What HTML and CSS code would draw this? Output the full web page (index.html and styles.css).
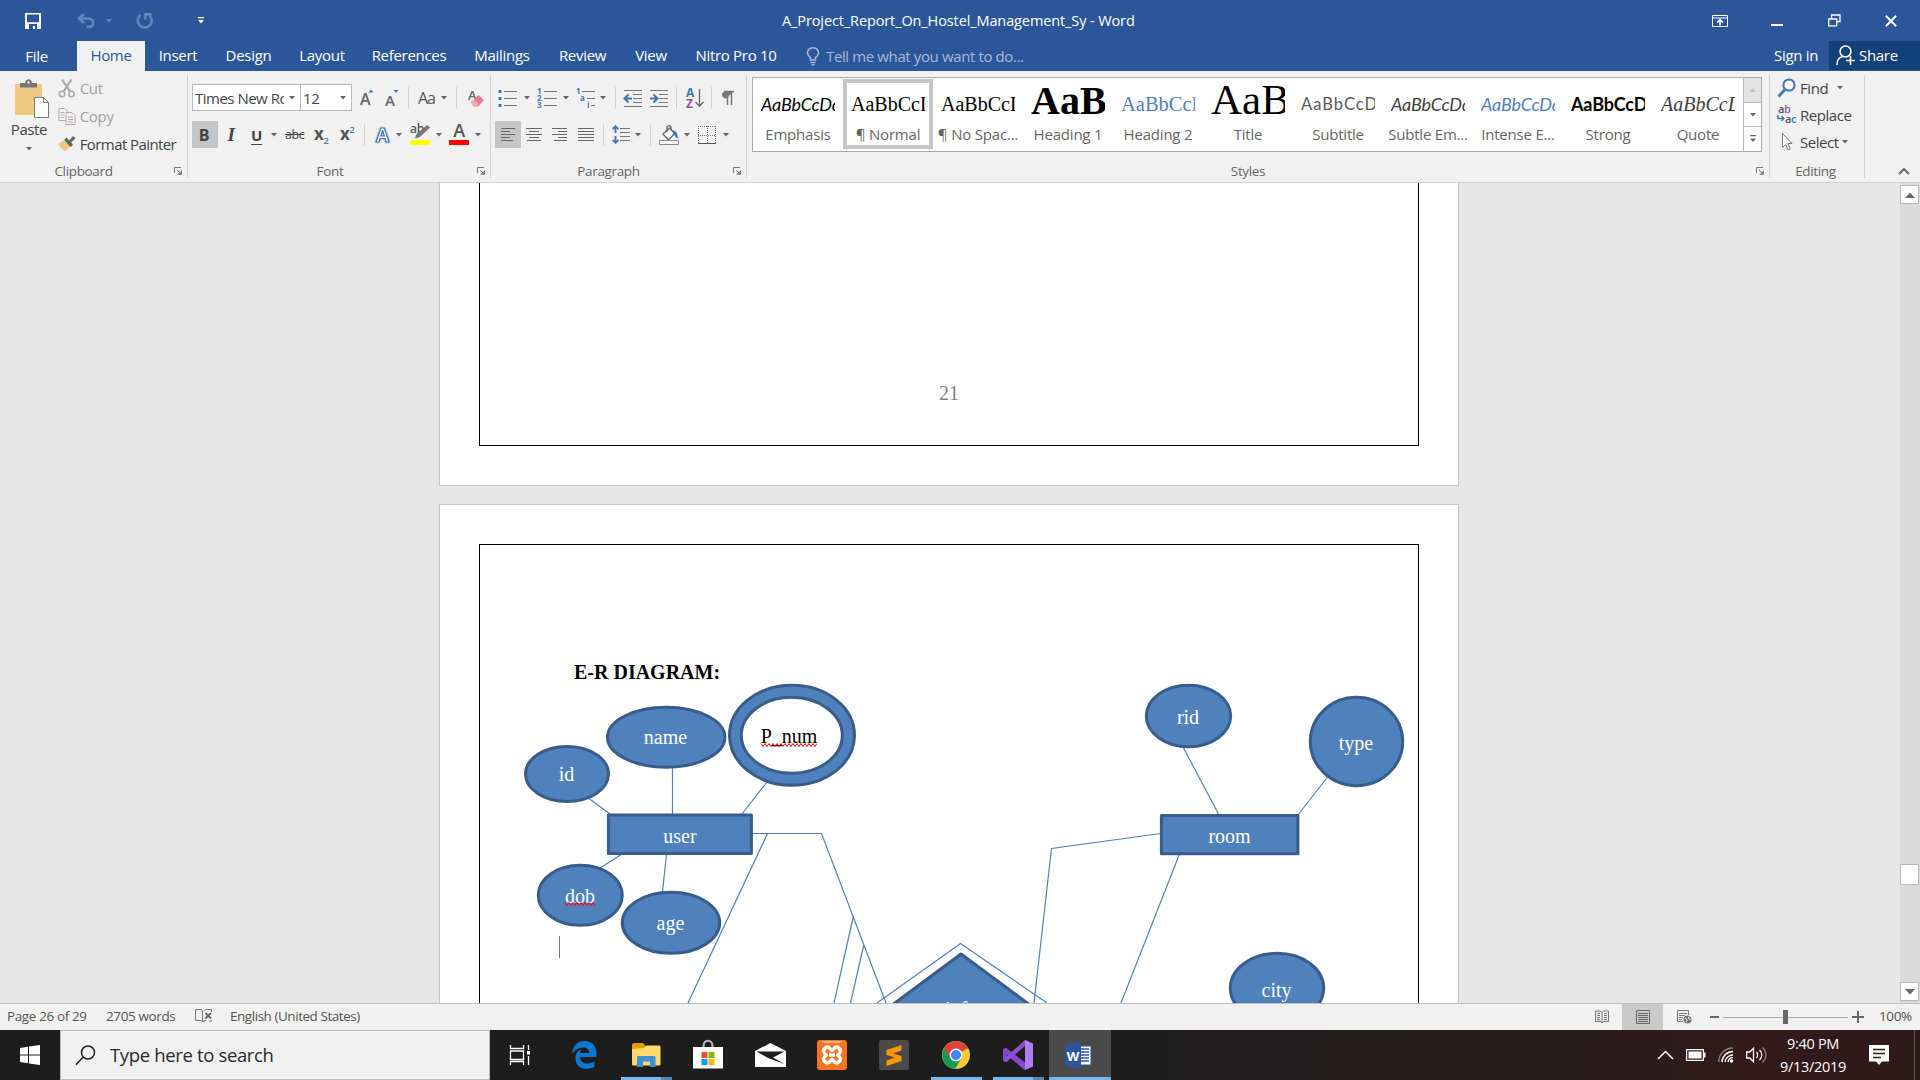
FILE: index.html
```html
<!DOCTYPE html>
<html lang="en">
<head>
<meta charset="utf-8">
<title>A_Project_Report_On_Hostel_Management_Sy - Word</title>
<link rel="stylesheet" href="styles.css">
</head>
<body>
<svg class="defs" width="0" height="0">
  <symbol id="arrow" viewBox="0 0 6 4"><path d="M0 0h6L3 3.6z" fill="#666"/></symbol>
  <symbol id="launcher" viewBox="0 0 8 8"><path d="M.5 6V.5H7M3 3l4 4M7.2 3.5v3.7H3.5" fill="none" stroke="#777"/><path d="M7.7 4v3.7H4z" fill="#777"/></symbol>
</svg>

<header class="titlebar">
  <div class="quick">
    <svg class="save" width="16" height="16" viewBox="0 0 16 16"><path d="M0 0h16v16H0z" fill="#fff"/><path d="M2 1.400h12v7.800H2zM4 11h8v5h-2v-3H8v3H4z" fill="#2b579a"/></svg>
    <svg class="undo" width="18" height="16" viewBox="0 0 18 16"><path d="M7 1L2 5.500l5 4.500M2 5.500h9c7 0 7 8.500 0 8.500H9.500" fill="none" stroke="#6487bb" stroke-width="2.600"/></svg>
    <svg class="undo-more" width="6" height="4"><path d="M0 0h6L3 3.600z" fill="#6487bb"/></svg>
    <svg class="redo" width="18" height="17" viewBox="0 0 18 17"><path d="M4.500 3A7 7 0 1 0 13.500 3.500M9.500 7.500V2.200h6" fill="none" stroke="#6487bb" stroke-width="2.500"/></svg>
    <svg class="qmore" width="6" height="7"><path d="M0 0h6v1.300H0zM0 3h6L3 6.400z" fill="#fff"/></svg>
  </div>
  <div class="doc-title">A_Project_Report_On_Hostel_Management_Sy - Word</div>
  <div class="winbtns">
    <svg width="16" height="12"><path d="M.5.500h15v11H.5zM0 3h16" fill="none" stroke="#fff"/><path d="M8 4.500v6M5 7.500l3-2.800 3 2.800" fill="none" stroke="#fff" stroke-width="1.700"/></svg>
    <svg width="12" height="12"><path d="M0 9h12v2H0z" fill="#fff"/></svg>
    <svg width="13" height="13"><path d="M.7 5h8v6.800h-8zM3.500 4.500V1h8.500v6.500H9" fill="none" stroke="#fff" stroke-width="1.300"/></svg>
    <svg width="12" height="12"><path d="M.8.800l10.400 10.400M11.200.800L.8 11.200" stroke="#fff" stroke-width="2"/></svg>
  </div>
</header>

<nav class="tabs">
  <a class="file">File</a><a class="active">Home</a><a>Insert</a><a>Design</a><a>Layout</a><a>References</a><a>Mailings</a><a>Review</a><a>View</a><a>Nitro Pro 10</a>
  <div class="tell">
    <svg width="12" height="19" viewBox="0 0 12 19"><path d="M3.500 13v-2.500C-3 5 2.500.700 6 .700s9 4.300 2.500 9.800V13zM3.500 15.500h5M4.500 17.800h3" fill="none" stroke="#a5b9d8" stroke-width="1.500"/></svg>
    <span>Tell me what you want to do...</span>
  </div>
  <span class="signin">Sign in</span>
  <div class="share"><svg width="20" height="21" viewBox="0 0 20 21"><circle cx="9.500" cy="6.500" r="5.500" fill="none" stroke="#fff" stroke-width="1.500"/><path d="M1 20c0-5 2.500-8 6-8.500M10 15.500h9M14.500 11v9" fill="none" stroke="#fff" stroke-width="1.500"/></svg><span>Share</span></div>
</nav>

<section class="ribbon">
  <div class="group clipboard">
    <div class="body">
      <div class="paste">
        <svg width="36" height="40" viewBox="0 0 36 40"><path d="M1 5h27v31H1z" fill="#edc87e"/><path d="M6 8.500V4h5c0-5 7-5 7 0h5v4.500z" fill="#757575"/><circle cx="14.500" cy="3.500" r="1.300" fill="#f1f1f1"/><path d="M20.500 18.500h9l5 5v15h-14z" fill="#fff" stroke="#777"/><path d="M29.500 18.500v5h5" fill="none" stroke="#777"/></svg>
        <span>Paste</span>
        <svg width="6" height="4"><use href="#arrow"/></svg>
      </div>
      <div class="clip-list">
        <div class="off"><svg width="17" height="19" viewBox="0 0 17 19"><g fill="none" stroke="#a9a9a9" stroke-width="1.600"><path d="M3.500.500l8 12M13 .500l-8 12" stroke-width="2.200"/><circle cx="3.500" cy="15" r="2.700"/><circle cx="13" cy="15" r="2.700"/></g></svg><span>Cut</span></div>
        <div class="off"><svg width="17" height="19" viewBox="0 0 17 19"><g fill="#f4f2f4" stroke="#b0aab0"><path d="M.5 1.500h6l3 3v9h-9z"/><path d="M7.500 5.500h6l3 3v9h-9z"/><path d="M2 5.500h4M2 8h4M2 10.500h4M9.500 10h5M9.500 12.500h5M9.500 15h5"/></g></svg><span>Copy</span></div>
        <div><svg width="18" height="16" viewBox="0 0 18 16"><path d="M0 8l6-3.500 6 6L7.500 15C4 14 2 11 0 8z" fill="#edc87e"/><path d="M6 4l2.500-2.500 2.700 3L15 0l2.500 2.500-4.300 4L15 9l-2.500 2z" fill="#666"/></svg><span class="fp">Format Painter</span></div>
      </div>
    </div>
    <footer><span>Clipboard</span><svg width="8" height="8"><use href="#launcher"/></svg></footer>
  </div>

  <div class="group font">
    <div class="row one">
      <div class="combo face"><span>Times New Roman</span><svg width="6" height="4"><use href="#arrow"/></svg></div>
      <div class="combo size"><span>12</span><svg width="6" height="4"><use href="#arrow"/></svg></div>
      <svg class="m8" width="16" height="18"><text x="0" y="16" class="g17">A</text><path d="M8.500 3.500h5L11 .500z" fill="#3f76b5"/></svg>
      <svg class="m9" width="16" height="18"><text x="0" y="17" class="g16">A</text><path d="M8.500 1h5L11 4z" fill="#3f76b5"/></svg>
      <i class="sep m7"></i>
      <span class="aa">Aa</span>
      <svg class="m6" width="6" height="4"><use href="#arrow"/></svg>
      <i class="sep m9"></i>
      <svg class="m11" width="17" height="20" viewBox="0 0 17 20"><text x="0" y="12" class="g15">A</text><path d="M3 14.500L10.500 7l5.500 5-6 6.500H6z" fill="#e8798f"/><path d="M3 14.500l3.300-3 4.500 4.500-2.300 2.500H6z" fill="#f2a7b5"/></svg>
    </div>
    <div class="row two">
      <b class="hl">B</b>
      <i class="it">I</i>
      <b class="un">U</b>
      <svg class="m9" width="6" height="4"><use href="#arrow"/></svg>
      <s class="st">abc</s>
      <svg class="m8" width="16" height="20"><text x="0" y="15" class="xb">x</text><text x="9.500" y="19" class="idx">2</text></svg>
      <svg class="m10" width="16" height="20"><text x="0" y="15" class="xb">x</text><text x="9.500" y="8" class="idx">2</text></svg>
      <i class="sep m8"></i>
      <svg class="m9" width="18" height="20"><text x="2" y="17" class="glow">A</text></svg>
      <svg class="m4" width="6" height="4"><use href="#arrow"/></svg>
      <svg class="m8" width="20" height="21"><text x="0" y="9" class="hlt">ab</text><path d="M5 14.500l1.500-4.500L17 1l3 2.500-10 9.500z" fill="#777"/><path d="M0 16h20v5H0z" fill="#ff0"/></svg>
      <svg class="m6" width="6" height="4"><use href="#arrow"/></svg>
      <svg class="m7" width="20" height="21"><text x="10" y="13" text-anchor="middle" class="g18">A</text><path d="M0 16h20v5H0z" fill="red"/></svg>
      <svg class="m6" width="6" height="4"><use href="#arrow"/></svg>
    </div>
    <footer><span>Font</span><svg width="8" height="8"><use href="#launcher"/></svg></footer>
  </div>

  <div class="group para">
    <div class="row one">
      <svg class="m7" width="20" height="18"><path d="M6 2.500h13M6 9.500h13M6 16.500h13" stroke="#777"/><path d="M.5 1h3v3h-3zM.5 8h3v3h-3zM.5 15h3v3h-3z" fill="#3f76b5"/></svg>
      <svg class="m6" width="6" height="4"><use href="#arrow"/></svg>
      <svg class="m7" width="20" height="20"><path d="M7 3.500h13M7 10.500h13M7 17.500h13" stroke="#777"/><g class="dg"><text x="0" y="6">1</text><text x="0" y="13">2</text><text x="0" y="20">3</text></g></svg>
      <svg class="m6" width="6" height="4"><use href="#arrow"/></svg>
      <svg class="m7" width="20" height="20"><path d="M6 3.500h13M11 10.500h8M15 17.500h4" stroke="#777"/><g class="dg"><text x="0" y="6">1</text><text x="4" y="13">a</text><text x="11" y="20">i</text></g></svg>
      <svg class="m4" width="6" height="4"><use href="#arrow"/></svg>
      <i class="sep m9"></i>
      <svg class="m7" width="20" height="18"><path d="M1 1.500h18M10 5.500h9M10 9.500h9M10 13.500h9M1 17.500h18" stroke="#777"/><path d="M9 9.500H2M5.500 5.500l-4 4 4 4" fill="none" stroke="#3f76b5" stroke-width="2"/></svg>
      <svg class="m6" width="20" height="18"><path d="M1 1.500h18M10 5.500h9M10 9.500h9M10 13.500h9M1 17.500h18" stroke="#777"/><path d="M1 9.500h7M4.500 5.500l4 4-4 4" fill="none" stroke="#3f76b5" stroke-width="2"/></svg>
      <i class="sep m7"></i>
      <svg class="m9" width="18" height="20"><text x="0" y="9" class="az a">A</text><text x="0" y="19.500" class="az z">Z</text><path d="M13.500 1v17M9.500 14l4 4 4-4" fill="none" stroke="#666" stroke-width="1.300"/></svg>
      <i class="sep m7"></i>
      <svg class="m9" width="14" height="16"><path d="M5.500 8.500C-.5 8.500-.5 1 5.500 1H13" fill="#777"/><path d="M3 1.500h10M6.500 1v14M10.500 1v14" stroke="#777" stroke-width="1.500"/></svg>
    </div>
    <div class="row two">
      <div class="hl"><svg width="14" height="13"><path d="M0 .500h14M0 3.500h9M0 6.500h14M0 9.500h9M0 12.500h12" stroke="#666"/></svg></div>
      <svg class="m5" width="16" height="13"><path d="M0 .500h16M3 3.500h10M0 6.500h16M3 9.500h10M1 12.500h14" stroke="#666"/></svg>
      <svg class="m10" width="15" height="13"><path d="M0 .500h15M6 3.500h9M0 6.500h15M6 9.500h9M2 12.500h13" stroke="#666"/></svg>
      <svg class="m11" width="16" height="13"><path d="M0 .500h16M0 3.500h16M0 6.500h16M0 9.500h16M0 12.500h16" stroke="#666"/></svg>
      <i class="sep m9"></i>
      <svg class="m8" width="18" height="19"><path d="M3.500 1v7M.7 4L3.500 1.200 6.300 4M3.500 11v7M.7 15l2.800 2.800L6.300 15" fill="none" stroke="#3f76b5" stroke-width="1.800"/><path d="M8 3.500h10M8 7.500h10M8 11.500h10M8 15.500h10" stroke="#777"/></svg>
      <svg class="m5" width="6" height="4"><use href="#arrow"/></svg>
      <i class="sep m9"></i>
      <svg class="m8" width="20" height="20"><path d="M4 9l6.500-6 5 5.500-6 6.500z" fill="#fff" stroke="#666" stroke-width="1.300"/><path d="M8 7V2.500c0-2.500 4-2.500 4 0V5" fill="none" stroke="#666" stroke-width="1.300"/><path d="M13 5c5 1 6 4 5.500 9L15 10z" fill="#3f76b5"/><path d="M.5 15.500h19v4H.5z" fill="#fff" stroke="#888"/></svg>
      <svg class="m5" width="6" height="4"><use href="#arrow"/></svg>
      <svg class="m8" width="18" height="18"><path d="M.5 0v17M9.500 0v17M17.500 0v17M0 .500h18M0 9.500h18" stroke="#777" stroke-dasharray="1 1"/><path d="M0 17.500h18" stroke="#555"/></svg>
      <svg class="m7" width="6" height="4"><use href="#arrow"/></svg>
    </div>
    <footer><span>Paragraph</span><svg width="8" height="8"><use href="#launcher"/></svg></footer>
  </div>

  <div class="group styles">
    <div class="gallery">
      <div class="style"><p class="em">AaBbCcDd</p><span>Emphasis</span></div>
      <div class="style on"><p>AaBbCcDd</p><span>¶ Normal</span></div>
      <div class="style"><p>AaBbCcDd</p><span>¶ No Spac...</span></div>
      <div class="style"><p class="h1">AaB</p><span>Heading 1</span></div>
      <div class="style"><p class="h2">AaBbCcDd</p><span>Heading 2</span></div>
      <div class="style"><p class="ti">AaB</p><span>Title</span></div>
      <div class="style"><p class="su">AaBbCcDd</p><span>Subtitle</span></div>
      <div class="style"><p class="em se">AaBbCcDd</p><span>Subtle Em...</span></div>
      <div class="style"><p class="em ie">AaBbCcDd</p><span>Intense E...</span></div>
      <div class="style"><p class="sg">AaBbCcDd</p><span>Strong</span></div>
      <div class="style"><p class="qu">AaBbCcDd</p><span>Quote</span></div>
      <div class="gscroll">
        <div class="dim"><svg width="6" height="4"><path d="M0 4h6L3 .500z" fill="#bbb"/></svg></div>
        <div><svg width="6" height="4"><use href="#arrow"/></svg></div>
        <div><svg width="6" height="8"><path d="M0 0h6v1.200H0zM0 3.500h6L3 7z" fill="#666"/></svg></div>
      </div>
    </div>
    <footer><span>Styles</span><svg width="8" height="8"><use href="#launcher"/></svg></footer>
  </div>

  <div class="group editing">
    <div class="edit-list">
      <div><svg width="20" height="20"><circle cx="12" cy="7" r="5.600" fill="#fff" stroke="#3f76b5" stroke-width="2"/><path d="M8 11.500l-6.500 7" stroke="#3f76b5" stroke-width="2.800"/></svg><span>Find</span><svg class="m6" width="6" height="4"><use href="#arrow"/></svg></div>
      <div><svg width="20" height="20"><text x="1" y="8" class="rp">a</text><text x="7" y="8" class="rp v">b</text><text x="8" y="18" class="rp">a</text><text x="14" y="18" class="rp bl">c</text><path d="M1 10v3.500h6M4.500 11l2.500 2.500L4.500 16" fill="none" stroke="#3f76b5" stroke-width="1.300"/></svg><span>Replace</span></div>
      <div><svg width="20" height="20"><path d="M5.500 1.500v14l3.300-3 2.500 5.500 2-1-2.500-5.500h4.200z" fill="#fff" stroke="#777"/></svg><span>Select</span><svg width="6" height="4"><use href="#arrow"/></svg></div>
    </div>
    <footer><span>Editing</span></footer>
  </div>
  <svg class="collapse" width="12" height="8"><path d="M1 7l5-5 5 5" fill="none" stroke="#666" stroke-width="2"/></svg>
</section>

<main class="workspace">
  <div class="pages">
    <section class="page first"><div class="frame"><span>21</span></div></section>
    <section class="page second"><div class="frame"><h1>E-R DIAGRAM:</h1></div></section>
    <svg class="diagram" width="1020" height="820" viewBox="439 183 1020 820">
      <g class="line">
        <path d="M589 798.500L610 814M672.500 768v46M767 782l-25 32M752 833.500h69.500L886 1003M767.500 833.500L688 1003M853.500 915.500L834 1003M864 944l-13.500 59M622 854l-22 14M666.500 854l-4 38M1183 747l35.500 67M1327.500 777L1298 815M1161 833.500L1051.500 848.500 1034 1003M1179.500 854L1121 1003"/>
        <path d="M877 1003l83.500-59.500L1047 1003"/>
      </g>
      <g class="shape">
        <ellipse cx="567" cy="774" rx="41.500" ry="27.500"/>
        <ellipse cx="666.200" cy="737.200" rx="58.700" ry="30"/>
        <ellipse cx="792" cy="735.300" rx="62.500" ry="50"/>
        <ellipse cx="791.800" cy="735.300" rx="50.500" ry="38" class="hole"/>
        <rect x="608.400" y="815" width="143" height="38.500"/>
        <ellipse cx="580.300" cy="895.300" rx="42" ry="30"/>
        <ellipse cx="671" cy="922.800" rx="48.700" ry="30.500"/>
        <ellipse cx="1188.500" cy="716" rx="42.200" ry="30.700"/>
        <ellipse cx="1356.500" cy="741.500" rx="46.200" ry="44.200"/>
        <rect x="1161.400" y="815.400" width="136.500" height="38.400"/>
        <ellipse cx="1277" cy="988" rx="46.700" ry="34.700"/>
        <path d="M961 954L880 1014l81 60 81-60z"/>
      </g>
      <g class="label">
        <text x="566.500" y="781">id</text><text x="665.500" y="744">name</text><text x="789" y="742.500" class="dark">P_num</text><text x="680" y="842.500">user</text>
        <text x="580" y="902.500">dob</text><text x="670.500" y="930">age</text><text x="1188" y="723.500">rid</text><text x="1356" y="749.500">type</text><text x="1229.500" y="842.500">room</text><text x="1276.500" y="996.500">city</text><text x="961" y="1016">info</text>
      </g>
      <path class="squiggle" d="M761 743.500l2 3 2-3 2 3 2-3 2 3 2-3 2 3 2-3 2 3 2-3 2 3 2-3 2 3 2-3 2 3 2-3 2 3 2-3 2 3 2-3 2 3 2-3 2 3 2-3 2 3 2-3 2 3 2-3M565 902.500l2 3 2-3 2 3 2-3 2 3 2-3 2 3 2-3 2 3 2-3 2 3 2-3 2 3 2-3 2 3"/>
      <path d="M559.500 936v22" stroke="#777"/>
    </svg>
  </div>
  <div class="vscroll">
    <div class="btn"><svg width="10" height="6"><path d="M0 6h10L5 .500z" fill="#666"/></svg></div>
    <div class="thumb"></div>
    <div class="btn"><svg width="10" height="6"><path d="M0 0h10L5 5.500z" fill="#666"/></svg></div>
  </div>
</main>

<div class="status">
  <span class="s1">Page 26 of 29</span><span class="s2">2705 words</span>
  <svg class="proof" width="18" height="16"><path d="M7.500 14V2.500L6 1.500H.5v11H6l2 1.500 2-1.500h1M9.500 2.500l1.500-1h5.500V4M16.500 12v1H14" fill="none" stroke="#777"/><path d="M10.500 5l5.500 5.500M16 5l-5.500 5.500" stroke="#666" stroke-width="1.800"/></svg>
  <span class="s3">English (United States)</span>
  <div class="views">
    <svg width="14" height="14"><path d="M7 2.500L5.500 1H.5v10.500h5L7 13l1.500-1.500h5V1h-5zV13M2 3.500h3M2 5.500h3M2 7.500h3M2 9.500h3M9 3.500h3M9 5.500h3M9 7.500h3M9 9.500h3" fill="none" stroke="#777"/></svg>
    <div class="cur"><svg width="14" height="14"><path d="M.5.500h13v13H.5zM2 3.500h10M2 5.500h10M2 7.500h10M2 9.500h10M2 11.500h10" fill="none" stroke="#666"/></svg></div>
    <svg width="15" height="14"><path d="M11.500 5V.500H.5v11H6M2 3.500h8M2 5.500h6M2 7.500h4M2 9.500h3" fill="none" stroke="#777"/><circle cx="10.500" cy="9.500" r="4" fill="#777"/><path d="M8 8l2 1.500L9.500 12M12 6.500l-.5 2 2 1" fill="none" stroke="#f1f1f1"/></svg>
  </div>
  <svg class="zoomer" width="155" height="14"><path d="M0 6h9v2H0zM142 6h12v2h-12zM147 1h2v12h-2z" fill="#666"/><path d="M13 7.500h125" stroke="#aaa"/><path d="M73 0h5v14h-5z" fill="#666"/></svg>
  <span class="pct">100%</span>
</div>

<footer class="taskbar">
  <div class="start"><svg width="20" height="20"><path d="M0 3l8-1.200v7.700H0zM9 1.600L20 0v9.500H9zM0 10.500h8v7.700L0 17zM9 10.500h11V20L9 18.400z" fill="#fff"/></svg></div>
  <div class="search"><svg width="21" height="21"><circle cx="13" cy="7.500" r="6.500" fill="none" stroke="#222" stroke-width="1.500"/><path d="M8.300 12L1 19.800" stroke="#222" stroke-width="1.500"/></svg><span>Type here to search</span></div>
  <div class="app view"><svg width="22" height="20"><path d="M1.500 0v3.500h13V0M1.500 20v-3.500h13V20M1.500 6h13v8.500h-13zM19.500 0v5M19.500 11v9" fill="none" stroke="#fff" stroke-width="1.300"/><path d="M18 6h3v3.500h-3z" fill="#fff"/></svg></div>
  <div class="app"><svg width="25" height="28" viewBox="0 0 25 28"><path d="M0 13C1 4 6 0 12.500 0 20 0 24.500 5.500 24.500 12v4H8c.3 7.500 8.500 8 14.500 4.500v5.500C14 30 3.500 27.500 3.500 17.500c0-5 2.500-8 6-9.500-1 1.300-1.500 2.500-1.700 4h9.500c0-7-11-8-17.300 1z" fill="#0a78d7"/></svg></div>
  <div class="app run more"><svg width="29" height="24" viewBox="0 0 29 24"><path d="M0 2c0-1 1-2 2-2h9l2.500 3v4H0z" fill="#dfa000"/><path d="M0 6l12-1 2-2.500h13c1 0 1.500.500 1.500 1.500v17c0 1-.5 1.500-1.500 1.500H1.500C.5 22.500 0 22 0 21z" fill="#ffd96b"/><path d="M5 24v-9.500c0-1 .6-1.500 1.500-1.500h15.500c1 0 1.500.500 1.500 1.500V24H18v-5.500h-7V24z" fill="#3b93d6"/></svg></div>
  <div class="app"><svg width="30" height="30" viewBox="0 0 30 30"><path d="M10.500 8V6c0-7 9-7 9 0v2" fill="none" stroke="#bbb" stroke-width="2.200"/><path d="M0 7h30v21.500H0z" fill="#fff"/><path d="M8.500 12h6v6h-6z" fill="#f25022"/><path d="M15.500 12h6v6h-6z" fill="#7fba00"/><path d="M8.500 19h6v6h-6z" fill="#00a4ef"/><path d="M15.500 19h6v6h-6z" fill="#ffb900"/></svg></div>
  <div class="app"><svg width="31" height="24" viewBox="0 0 31 24"><path d="M0 8L15.500 0 31 8v16H0z" fill="#fff"/><path d="M1.500 8.500h28L18 14.500l11.500 6.500L13 15z" fill="#1e1d1d"/></svg></div>
  <div class="app"><svg width="30" height="30" viewBox="0 0 30 30"><rect width="30" height="30" rx="3" fill="#f37623"/><path d="M5 1h20l-2 2H7z" fill="#fbb78b"/><path d="M9 7.500c4-2 4.500 3 6 3s2-5 6-3c5 3 1 6 0 7.500 1 1.500 5 4.500 0 7.500-4 2-4.500-3-6-3s-2 5-6 3c-5-3-1-6 0-7.500-1-1.500-5-4.500 0-7.500zM12 15h6" fill="none" stroke="#fff" stroke-width="3.400"/></svg></div>
  <div class="app"><svg width="30" height="30" viewBox="0 0 30 30"><rect width="30" height="30" rx="2" fill="#4a4a4a"/><path d="M7.500 10L22.500 5v5.500l-8.500 3 8.500 2.500v5L7.500 26v-5.500l8.500-3-8.500-2.500z" fill="#ff9800"/></svg></div>
  <div class="app run"><svg width="28" height="28" viewBox="0 0 28 28"><circle cx="14" cy="14" r="14" fill="#fcc934"/><path d="M14 14L2 7A14 14 0 0 1 26 7z" fill="#db4437"/><path d="M2 7A14 14 0 0 0 13 28l6.500-11L14 14z" fill="#0f9d58"/><path d="M14 7.500h12.300L26 7A14 14 0 0 0 2 7l6 10z" fill="#db4437"/><circle cx="14" cy="14" r="6.500" fill="#fff"/><circle cx="14" cy="14" r="5" fill="#4285f4"/></svg></div>
  <div class="app run more"><svg width="30" height="30" viewBox="0 0 30 30"><path d="M0 9l3-1.300L24 24l-2.500 6L3.500 14.500V22L0 20.500z" fill="#8547cc"/><path d="M0 20.500L3 22.500 22 6V0L3.500 16.500z" fill="#8b4fd0"/><path d="M22 0l8 3.500v23L22 30z" fill="#b27df0"/></svg></div>
  <div class="app run word"><svg width="27" height="27" viewBox="0 0 27 27"><path d="M14 4h12v19H14z" fill="#fff" stroke="#2b579a"/><path d="M16 7h8M16 10h8M16 13h8M16 16h8M16 19h8" stroke="#2b579a" stroke-width="1.600"/><path d="M0 3l16-3v27L0 24z" fill="#2b579a"/><text x="8" y="18.500" text-anchor="middle" class="wl">W</text></svg></div>
  <div class="tray">
    <svg class="chev" width="17" height="10"><path d="M1 9l7.500-7.500L16 9" fill="none" stroke="#fff" stroke-width="1.500"/></svg>
    <svg class="bat" width="20" height="12"><path d="M.6.600h16.800v10.800H.6z" fill="none" stroke="#fff" stroke-width="1.200"/><path d="M2.500 2.500h13v7h-13zM18 3.500h1.500v5H18z" fill="#fff"/></svg>
    <svg class="wifi" width="17" height="16"><g fill="none" stroke-width="1.400"><path d="M.8 15A14 14 0 0 1 15 1" stroke="#8d7b7c"/><path d="M4 15A11 11 0 0 1 15 4.500M7 15A8 8 0 0 1 15 8" stroke="#fff"/><path d="M10 15a5 5 0 0 1 5-4.500" stroke="#fff"/></g><circle cx="13.500" cy="14" r="1.800" fill="#fff"/></svg>
    <svg class="vol" width="21" height="18"><path d="M.7 6h3L7.500 2.200v13.600L3.700 12h-3zM10.500 6c1.500 2 1.500 4 0 6M13.500 4c3 3 3 7 0 10" fill="none" stroke="#fff" stroke-width="1.300"/><path d="M16.500 1.500c4.500 4.500 4.500 10.500 0 15" fill="none" stroke="#8d7b7c" stroke-width="1.300"/></svg>
    <div class="clock"><span>9:40 PM</span><span>9/13/2019</span></div>
    <svg class="note" width="20" height="21"><path d="M0 0h20v16.500h-7l-3 3.500-3-3.500H0z" fill="#fff"/><path d="M4 4.500h12M4 8.500h12M4 12.500h8" stroke="#2f191b" stroke-width="1.400"/></svg>
  </div>
</footer>
</body>
</html>
```

FILE: styles.css
```css
* { box-sizing: border-box; }
body {
  margin: 0; width: 1920px; height: 1080px; overflow: hidden;
  display: flex; flex-direction: column;
  font: 15px/20px "Open Sans", "Noto Sans", sans-serif;
  letter-spacing: -.3px; color: #444; background: #e6e6e6;
}
svg { display: block; flex: none; overflow: visible; }
.defs { position: absolute; }
span { white-space: nowrap; }

.titlebar { height: 41px; flex: none; background: #2b579a; display: flex; align-items: center; color: #fff; }
.quick { width: 782px; display: flex; align-items: center; }
.quick .save { margin-left: 25px; }
.quick .undo { margin-left: 36px; }
.quick .undo-more { margin-left: 11px; }
.quick .redo { margin-left: 24px; }
.quick .qmore { margin-left: 44px; }
.doc-title { width: 930px; font-size: 14.500px; letter-spacing: -.11px; }
.winbtns { display: flex; align-items: center; }
.winbtns svg:nth-child(2) { margin-left: 43px; }
.winbtns svg:nth-child(3) { margin-left: 45px; }
.winbtns svg:nth-child(4) { margin-left: 44px; }

.tabs { height: 30px; flex: none; background: #2b579a; display: flex; color: #fff; line-height: 29px; }
.tabs a { text-align: center; width: 66px; }
.tabs a.file { width: 77px; padding: 1px 4px 0 0; }
.tabs a.active { width: 68px; background: #f1f1f1; color: #2b579a; }
.tabs a:nth-child(4) { width: 75px; }
.tabs a:nth-child(5) { width: 72px; }
.tabs a:nth-child(6) { width: 102px; }
.tabs a:nth-child(7) { width: 84px; }
.tabs a:nth-child(8) { width: 77px; }
.tabs a:nth-child(9) { width: 60px; }
.tabs a:nth-child(10) { width: 110px; }
.tell { display: flex; align-items: center; gap: 7px; margin-left: 16px; color: #a5b9d8; flex: 1; letter-spacing: -.38px; }
.signin { width: 55px; }
.share { width: 91px; height: 29px; background: #124078; display: flex; align-items: center; gap: 3px; padding-left: 7px; }

.ribbon { height: 112px; flex: none; background: #f1f1f1; border-bottom: 1px solid #d2d2d2; display: flex; padding-top: 4px; }
.group { height: 103px; border-right: 1px solid #d2d2d2; display: flex; flex-direction: column; }
.group footer { height: 14px; margin-top: auto; display: flex; align-items: center; color: #666; font-size: 13.500px; letter-spacing: -.35px; padding: 0 5px 0 0; }
.group footer span { flex: 1; text-align: center; padding-right: 7px; }
.clipboard { width: 188px; }
.clipboard .body { display: flex; }
.paste { width: 58px; display: flex; flex-direction: column; align-items: center; padding-top: 4px; }
.paste svg:first-child { margin-left: 6px; }
.paste span { margin: 0 0 8px; letter-spacing: -.45px; }
.clip-list { width: 130px; margin-top: -1px; }
.clip-list div { height: 28px; display: flex; align-items: center; gap: 4px; }
.clip-list .off { color: #a0a0a0; }
.clip-list svg { width: 18px; }
.clip-list .fp { letter-spacing: -.58px; }
.font { width: 303px; padding-left: 4px; }
.font footer, .para footer { width: 100%; }
.font footer span { padding-right: 9px; }
.para { width: 256px; }
.row { display: flex; align-items: center; flex: none; height: 27px; }
.row.one { margin-top: 9px; }
.row.two { margin-top: 10px; }
.sep { width: 1px; height: 22px; background: #d2d2d2; flex: none; }
.m4 { margin-left: 4px; } .m5 { margin-left: 5px; } .m6 { margin-left: 6px; }
.m7 { margin-left: 7px; } .m8 { margin-left: 8px; } .m9 { margin-left: 9px; } .m10 { margin-left: 10px; }
.m11 { margin-left: 11px; }
.combo { height: 27px; border: 1px solid #bababa; background: #fff; display: flex; align-items: center; padding-left: 2px; }
.combo.face { width: 109px; }
.combo.face span { width: 89px; overflow: hidden; margin-right: 5px; letter-spacing: -.5px; }
.combo.size { width: 52px; margin-left: -1px; }
.combo.size span { width: 37px; }
.aa { font-size: 16px; margin-left: 9px; width: 17px; letter-spacing: -1.200px; color: #555; }
.g17, .g16, .g15, .g18 { font: 600 16px "Open Sans"; fill: #666; }
.g16 { font-size: 15px; } .g15 { font-size: 13px; } .g18 { font-size: 18px; fill: #555; }
.hl { width: 26px; height: 27px; background: #c5c5c5; display: flex; align-items: center; justify-content: center; }
.font .hl { font-size: 16px; padding-right: 2px; }
.para .hl { margin-left: 4px; }
.it { width: 26px; text-align: center; font: italic bold 19px "Liberation Serif", serif; }
.un { width: 11px; margin-left: 7px; font-size: 15px; text-decoration: underline; text-underline-offset: 3px; }
.st { font-size: 12.500px; margin-left: 8px; width: 21px; letter-spacing: -.4px; }
.xb { font: bold 17px "Open Sans"; fill: #555; }
.idx { font: 600 9px "Open Sans"; fill: #3f76b5; }
.glow { font: bold 19px "Open Sans"; fill: #fff; stroke: #3f76b5; stroke-width: 1.200px; filter: drop-shadow(0 0 1px #7fb0e6); }
.hlt { font: 600 12px "Open Sans"; fill: #555; }
.dg { font: bold 8px "Open Sans"; fill: #3f76b5; }
.az { font: bold 12px "Open Sans"; } .az.a { fill: #3f76b5; } .az.z { fill: #8a5bb0; }

.styles { width: 1023px; padding-left: 5px; }
.styles footer span { padding-right: 12px; }
.gallery { height: 75px; width: 1010px; margin-top: 2px; border: 1px solid #ababab; background: #fff; display: flex; }
.style { width: 90px; flex: none; height: 73px; display: flex; flex-direction: column; align-items: center; color: #666; letter-spacing: -.2px; }
.style.on { box-shadow: inset 0 0 0 4px #c5c5c5; height: 70px; margin-top: 1px; }
.style p { margin: 8px 0 6px; width: 74px; height: 32px; line-height: 36px; overflow: hidden; white-space: nowrap; font-family: "Liberation Serif", serif; font-size: 20px; color: #000; letter-spacing: 0; }
.style.on p { margin-top: 7px; }
.style .em { font: italic 18px/37px Lato, sans-serif; letter-spacing: -.15px; }
.style .se { color: #404040; } .style .ie { color: #4f81bd; }
.style .h1 { font-size: 40px; line-height: 29px; font-weight: bold; }
.style .h2 { font-size: 20.500px; color: #4f81bd; }
.style .ti { font-size: 43px; line-height: 28px; }
.style .su { font: 16.500px/37px Lato, sans-serif; color: #5a5a5a; letter-spacing: 1px; }
.style .sg { font: bold 18px/37px Lato, sans-serif; letter-spacing: -.15px; }
.style .qu { font-style: italic; color: #404040; }
.gscroll { flex: 1; border-left: 1px solid #bababa; display: flex; flex-direction: column; }
.gscroll div { flex: 1; display: flex; align-items: center; justify-content: center; }
.gscroll div + div { border-top: 1px solid #bababa; }
.gscroll .dim { background: #e3e3e3; }
.editing { width: 95px; }
.editing footer span { padding: 0 0 0 2px; }
.edit-list { padding-left: 7px; margin-top: -1px; }
.edit-list div { height: 27px; display: flex; align-items: center; gap: 3px; letter-spacing: -.45px; }
.rp { font: 600 11px "Open Sans"; fill: #555; } .rp.v { fill: #8a5bb0; } .rp.bl { fill: #3f76b5; }
.collapse { margin: 92px 0 0 33px; }

.workspace { flex: none; height: 820px; display: flex; justify-content: flex-end; }
.pages { width: 1020px; margin-right: 441px; position: relative; overflow: hidden; }
.page { background: #fff; border: 1px solid #c6c6c6; padding: 0 39px; }
.page.first { height: 303px; border-top: 0; padding-bottom: 39px; }
.page.second { margin-top: 18px; height: 520px; padding-top: 39px; }
.frame { border: 1px solid #000; height: 100%; }
.first .frame { border-top: 0; display: flex; align-items: flex-end; justify-content: center; padding-bottom: 41px; font: 20px/22px "Liberation Serif", serif; color: #7f7f7f; letter-spacing: 0; }
.second .frame { height: 600px; }
h1 { margin: 115px 0 0 94px; font: bold 20px/24px "Liberation Serif", serif; color: #000; letter-spacing: 0; }
.diagram { position: absolute; left: 0; top: 0; }
.line { fill: none; stroke: #4f81bd; stroke-width: 1.200; }
.shape { fill: #4f81bd; stroke: #385d8a; stroke-width: 3; stroke-linejoin: round; }
.shape .hole { fill: #fff; }
.label { font: 20px "Liberation Serif", serif; fill: #fff; text-anchor: middle; letter-spacing: 0; }
.label .dark { fill: #000; }
.squiggle { fill: none; stroke: #f00; stroke-width: 1; }
.vscroll { width: 20px; background: #dadada; display: flex; flex-direction: column; padding: 2px 1px 2px 0; }
.vscroll .btn { height: 19px; border: 1px solid #bababa; background: #fff; display: flex; align-items: center; justify-content: center; }
.vscroll .thumb { height: 21px; border: 1px solid #bababa; background: #fff; margin: 660px 0 auto; }

.status { height: 27px; flex: none; background: #f1f1f1; border-top: 1px solid #c0c0c0; display: flex; align-items: center; font-size: 13.500px; letter-spacing: -.38px; color: #555; }
.status span { margin-top: -2px; }
.s1 { margin-left: 7px; width: 99px; } .s2 { width: 89px; } .s3 { margin-left: 17px; width: 1365px; letter-spacing: -.46px; }
.status .proof { margin-top: -2px; }
.views { display: flex; align-items: center; }
.views .cur { width: 41px; height: 26px; background: #c9c9c9; margin: 0 14px 0 13px; display: flex; align-items: center; justify-content: center; }
.zoomer { margin-left: 18px; }
.pct { margin-left: 14px; }

.taskbar { height: 50px; flex: none; background: linear-gradient(90deg, #1e1d1d 0, #1e1d1d 60%, #281c1d 82%, #35191b 92%, #2e191a 100%); display: flex; align-items: stretch; color: #fff; }
.start { width: 60px; display: flex; align-items: center; padding-left: 20px; }
.search { width: 430px; background: #f1f1f1; border: 1px solid #bbb; display: flex; align-items: center; padding-left: 14px; gap: 14px; font-size: 18.500px; color: #2b2b2b; letter-spacing: -.35px; }
.app { width: 62px; display: flex; align-items: center; justify-content: center; position: relative; }
.app.view { width: 63px; padding-right: 3px; }
.run::after { content: ""; position: absolute; left: 6px; right: 5px; bottom: 0; height: 3px; background: #76b9ed; }
.run.more::after { background: linear-gradient(90deg, #76b9ed 40px, #5588b0 40px); }
.app.word { background: #4a4a4a; padding-right: 3px; }
.word::after { left: 0; right: 0; }
.wl { font: bold 13px "Open Sans"; fill: #fff; }
.tray { margin-left: auto; width: 258px; display: flex; align-items: center; margin-right: 5px; border-right: 1px solid #665052; font-size: 14.500px; letter-spacing: -.3px; }
.bat { margin-left: 12px; } .wifi { margin-left: 12px; } .vol { margin-left: 11px; }
.clock { width: 92px; text-align: center; display: flex; flex-direction: column; line-height: 23px; padding-bottom: 1px; }
.note { margin-left: 10px; }
```
